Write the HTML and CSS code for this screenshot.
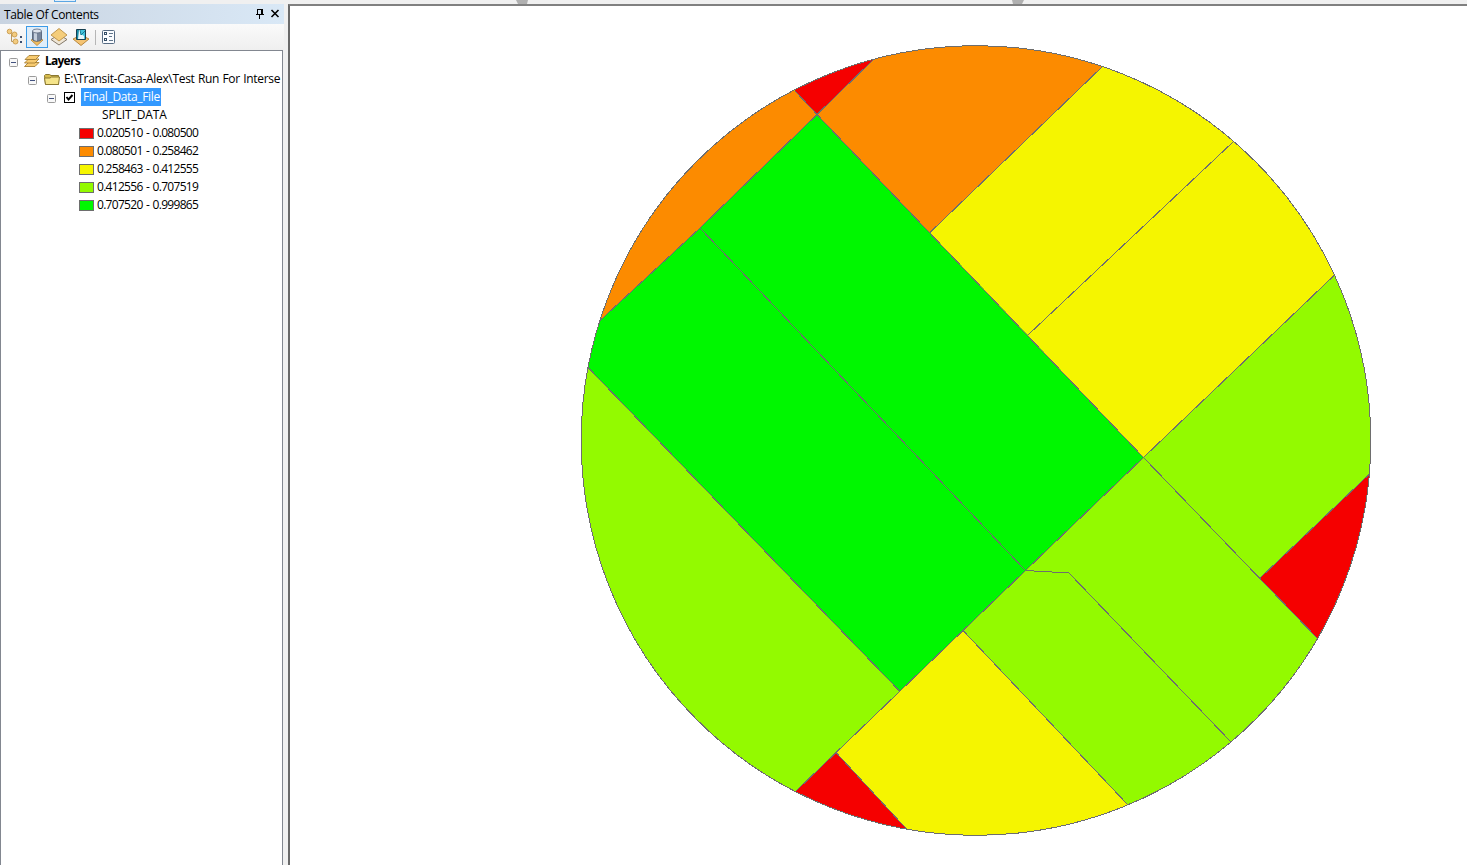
FILE: index.html
```html
<!DOCTYPE html>
<html lang="en">
<head>
<meta charset="utf-8">
<title>Table Of Contents</title>
<link rel="stylesheet" href="styles.css">
</head>
<body>
<div class="strip">
  <svg width="1467" height="4"><rect x="54.5" y="-8" width="21" height="9.500" fill="#e3f0fb" stroke="#5ba6e3"/><path d="M516 0h12l-1 4h-9z" fill="#b0b0b0"/><path d="M1012 0h12l-2 4h-9z" fill="#b0b0b0"/></svg>
</div>
<div class="main">
  <aside class="toc">
    <header class="title"><span class="title-text">Table Of Contents</span>
      <svg class="title-icons" width="26" height="12"><path d="M3.500 6V1.500h5V6M7.500 1.500V6M2 6.500h8M5.500 7v4" fill="none" stroke="#000" shape-rendering="crispEdges"/><path d="M17.500 2l7 7m0-7l-7 7" stroke="#000" stroke-width="1.600"/></svg>
    </header>
    <div class="tools">
      <svg width="130" height="26">
        <path d="M9.500 7.500l4 3M11.500 9.500v8h3" fill="none" stroke="#b59660"/><g fill="#f3cc80" stroke="#c89a4c" stroke-width=".9"><circle cx="9.500" cy="7.500" r="2.300"/><circle cx="14.500" cy="10.500" r="2.500"/><circle cx="15.500" cy="17.500" r="2.500"/></g>
        <path d="M20 12h2v2h-2zM20 17h2v2h-2z" fill="#3c4f70"/>
        <rect x="26.500" y="2.500" width="21" height="21" fill="#dfedf9" stroke="#3c9be8"/>
        <path d="M31 16l6-3 6 3-6 5.500z" fill="#efbd60" stroke="#b98332" stroke-width=".8"/>
        <path d="M32.500 7v8c0 3 9 3 9 0V7z" fill="#77859b" stroke="#4a5870" stroke-width=".8"/><path d="M34 8v8l3 1V8z" fill="#c5cfdd"/><ellipse cx="37" cy="7" rx="4.500" ry="2" fill="#dfe4ed" stroke="#59677c" stroke-width=".8"/>
        <path d="M51 15.500l8-5 8 5-8 5.500z" fill="#efe6d6" stroke="#776c5c" stroke-width=".9"/><path d="M51 11l8-6.500L67 11l-8 6z" fill="#f4cd7b" stroke="#b98f45" stroke-width=".9"/>
        <path d="M73 15l8-4 8 4-8 6.500z" fill="#f4c372" stroke="#a87424" stroke-width=".8"/>
        <path d="M76.500 5.500h9v10h-9z" fill="#42c3dc" stroke="#173f50"/><path d="M77 6h3l1 4 3 2v3h-7z" fill="#e8f8fb"/><path d="M77 6h2l-1 9h-1z" fill="#168ba5"/><path d="M80 6l1 5 4-4" fill="none" stroke="#147c92"/>
        <path d="M95.500 6v15" stroke="#b6b6b6"/>
        <rect x="102.500" y="6.500" width="12" height="13" rx="1" fill="#fafcff" stroke="#566b83"/><path d="M109 9.500h4M109 12.500h3M109 16.500h4" stroke="#60758a"/><g fill="none" stroke="#354e67"><rect x="104.500" y="8.500" width="2" height="2"/><rect x="104.500" y="14.500" width="2" height="2"/></g>
      </svg>
    </div>
    <div class="tree">
      <div class="row lvl0"><svg class="box" width="9" height="9"><rect x=".5" y=".5" width="8" height="8" rx="1" fill="#f8f8f8" stroke="#9a9a9a"/><path d="M2 4.500h5" stroke="#42527f"/></svg>
        <svg class="layers-icon" width="18" height="14"><g fill="#f8cb70" stroke="#9c7428" stroke-width=".8"><path d="M.5 12.500l4-4h10.500l-4 4z"/><path d="M.5 9l4-4h10.500L11 9z"/><path d="M1 5.500l4-4h10.500l-4 4z"/></g></svg><b class="t-layers">Layers</b></div>
      <div class="row lvl1"><svg class="box" width="9" height="9"><rect x=".5" y=".5" width="8" height="8" rx="1" fill="#f8f8f8" stroke="#9a9a9a"/><path d="M2 4.500h5" stroke="#42527f"/></svg>
        <svg class="folder" width="16" height="14"><path d="M1.500 12.500L.5 3.500l1-1h4l1.500 1h7.500v9z" fill="#d9bd4e" stroke="#8b7830"/><path d="M1.500 12.500L.5 6H6l1.500-1h8l-1 7.500z" fill="#f5e48a" stroke="#8b7830"/></svg><span class="t-path">E:\Transit-Casa-Alex\Test Run For Interse</span></div>
      <div class="row lvl2"><svg class="box" width="9" height="9"><rect x=".5" y=".5" width="8" height="8" rx="1" fill="#f8f8f8" stroke="#9a9a9a"/><path d="M2 4.500h5" stroke="#42527f"/></svg>
        <svg class="check" width="11" height="11"><rect x=".5" y=".5" width="10" height="10" fill="#fff" stroke="#000"/><path d="M2.500 5l2 2.500L8.500 3" fill="none" stroke="#000" stroke-width="1.900"/></svg><span class="selected"><span class="t-file">Final_Data_File</span></span></div>
      <div class="row field"><span class="t-field">SPLIT_DATA</span></div>
      <div class="row item"><i class="swatch red"></i><span>0.020510 - 0.080500</span></div>
      <div class="row item"><i class="swatch orange"></i><span>0.080501 - 0.258462</span></div>
      <div class="row item"><i class="swatch yellow"></i><span>0.258463 - 0.412555</span></div>
      <div class="row item"><i class="swatch lime"></i><span>0.412556 - 0.707519</span></div>
      <div class="row item"><i class="swatch green"></i><span>0.707520 - 0.999865</span></div>
    </div>
  </aside>
  <main class="map">
    <svg width="1177" height="859" viewBox="290 6 1177 859">
      <defs><clipPath id="disc"><circle cx="976" cy="440.500" r="394.800"/></clipPath></defs>
      <g clip-path="url(#disc)" class="zones">
        <path class="lime" d="M570 30h820v820H570z"/>
        <path class="orange" d="M599.500 321L700 228 817 114.500 795 91 700 0 570 200z"/>
        <path class="red" d="M795 91L817 114.500 874 59 900 20 780 20z"/>
        <path class="orange" d="M817 114.500L874 59 900 20h230L1103 66 930 232.500z"/>
        <path class="yellow" d="M930 232.500L1103 66 1130 20 1280 95 1233 142 1028 335z"/>
        <path class="yellow" d="M1028 335L1233 142 1280 95 1390 220 1334 275.500 1143.500 457.500z"/>
        <path class="green" d="M817 114.500L1143.500 457.500 1025.500 570.500 700 228z"/>
        <path class="green" d="M700 228L1025.500 570.500 899.500 691 588 367.500 560 340 599.500 321z"/>
        <path class="red" d="M1369 474.500L1259.500 578.500 1318 639 1400 700V450z"/>
        <path class="red" d="M796 791L836 752.500 907.500 830 920 860H740z"/>
        <path class="yellow" d="M836 752.500L963 630.500 1128 805 1140 860H920L907.500 830z"/>
      </g>
      <path class="lines" d="M599.500 321L700 228 817 114.500 874 59M795 91L817 114.500 1143.500 457.500 1318 639M930 232.500L1103 66M1028 335L1233 142M1334 275.500L1143.500 457.500 1025.500 570.500 796 791M588 367.500L899.500 691M700 228L1025.500 570.500 1069 573 1231 742M1259.500 578.500L1369 474.500M963 630.500L1128 805M836 752.500L907.500 830"/>
      <circle class="lines" cx="976" cy="440.500" r="394.800"/>
    </svg>
  </main>
</div>
</body>
</html>
```
FILE: styles.css
```css
* { box-sizing: border-box; }
body { margin: 0; width: 1467px; height: 865px; overflow: hidden; background: #f0f0f0; color: #000; font: 12px/18px "Open Sans", "Noto Sans", sans-serif; }
svg { display: block; flex: none; }
.strip { height: 4px; }
.main { display: flex; height: 861px; }
.toc { width: 284px; display: flex; flex-direction: column; }
.title { height: 20px; display: flex; align-items: center; justify-content: space-between; padding: 1px 4px 0; background: linear-gradient(90deg, #c9d4e1, #d9e8f6); }
.title-text { letter-spacing: -.34px; white-space: nowrap; }
.title-icons { margin-bottom: 2px; }
.tools { height: 26px; background: linear-gradient(#fafafa, #efefef); }
.tree { flex: 1; width: 283px; border: 1px solid #828790; border-bottom: 0; background: #fff; padding-top: 1px; overflow: hidden; }
.row { height: 18px; display: flex; align-items: center; white-space: nowrap; }
.box { margin-top: 2px; }
.lvl0 { padding-left: 8px; }
.lvl1 { padding-left: 27px; }
.lvl2 { padding-left: 46px; }
.layers-icon { margin-left: 6px; }
.t-layers { margin-left: 3px; letter-spacing: -.75px; }
.folder { margin-left: 7px; }
.t-path { margin-left: 4px; letter-spacing: -.32px; word-spacing: .6px; }
.check { margin-left: 8px; }
.selected { display: block; width: 80px; height: 18px; margin-left: 6px; padding-left: 2px; background: #3399ff; color: #fff; }
.t-file { letter-spacing: -.35px; }
.field { padding-left: 101px; letter-spacing: -.1px; }
.item { padding-left: 78px; letter-spacing: -.7px; word-spacing: 1px; }
.swatch { width: 15px; height: 11px; margin-right: 3px; border: 1px solid #6e6e6e; }
.map { flex: 1; margin-left: 4px; border: solid #696969; border-width: 2px 0 0 2px; border-top-color: #808080; background: #fff; }
.red { fill: #f50000; background: #f50000; }
.orange { fill: #fc8b00; background: #fc8b00; }
.yellow { fill: #f5f500; background: #f5f500; }
.lime { fill: #93fa00; background: #93fa00; }
.green { fill: #00f700; background: #00f700; }
.zones { shape-rendering: crispEdges; }
.lines { fill: none; stroke: #6e6e6e; stroke-width: 1; shape-rendering: crispEdges; }
```
